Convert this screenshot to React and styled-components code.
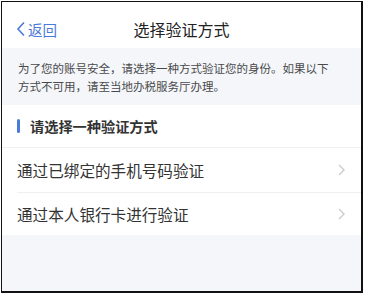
import React from 'react';
import styled, { createGlobalStyle } from 'styled-components';

const GlobalStyle = createGlobalStyle`
  html, body {
    margin: 0;
    padding: 0;
    background: #ffffff;
    font-family: "Noto Sans CJK SC", "Noto Sans", sans-serif;
  }
`;

const Frame = styled.div`
  margin: 1px 0 0 1px;
  width: 362px;
  height: 292px;
  box-sizing: border-box;
  border-style: solid;
  border-color: #111;
  border-width: 1px 2px 2px 1px;
  background: #f4f6fa;
  display: flex;
  flex-direction: column;
  overflow: hidden;
`;

const NavBar = styled.div`
  height: 46px;
  padding-top: 8px;
  box-sizing: border-box;
  background: #fff;
  display: grid;
  grid-template-columns: 80px 1fr 80px;
  align-items: center;
`;

const Back = styled.div`
  display: flex;
  align-items: center;
  gap: 2px;
  padding-left: 14px;
  color: #4a7bd8;
  font-size: 14.5px;
`;

const Title = styled.div`
  text-align: center;
  font-size: 16px;
  color: #222;
`;

const Notice = styled.div`
  padding: 11px 24px 10px 16px;
  font-size: 11.5px;
  line-height: 18px;
  color: #4a4a4a;
`;

const Card = styled.div`
  background: #fff;
  display: flex;
  flex-direction: column;
`;

const SectionHead = styled.div`
  height: 42px;
  display: flex;
  align-items: center;
  padding-left: 15px;
  gap: 10px;
  font-size: 14.2px;
  font-weight: 700;
  color: #333;
  border-bottom: 1px solid #eef0f3;
`;

const Bar = styled.span`
  width: 3px;
  height: 14px;
  border-radius: 1.5px;
  background: #4a7bd8;
`;

const Row = styled.div`
  height: ${({ $h }) => $h}px;
  display: flex;
  align-items: center;
  justify-content: space-between;
  margin-left: 15px;
  padding-right: 16px;
  font-size: 15.6px;
  color: #333;
  border-bottom: ${({ $last }) => ($last ? 'none' : '1px solid #eef0f3')};
`;

const Chevron = () => (
  <svg width="7" height="12" viewBox="0 0 7 12">
    <path d="M1 1l5 5-5 5" fill="none" stroke="#c9cbd0" strokeWidth="1.4" />
  </svg>
);

const BackArrow = () => (
  <svg width="10" height="16" viewBox="0 0 10 16">
    <path d="M8 1.5L2 8l6 6.5" fill="none" stroke="#4a7bd8" strokeWidth="1.6" />
  </svg>
);

export default function App() {
  return (
    <>
      <GlobalStyle />
      <Frame>
        <NavBar>
          <Back>
            <BackArrow />
            <span>返回</span>
          </Back>
          <Title>选择验证方式</Title>
          <div />
        </NavBar>
        <Notice>
          为了您的账号安全，请选择一种方式验证您的身份。如果以下方式不可用，请至当地办税服务厅办理。
        </Notice>
        <Card>
          <SectionHead>
            <Bar />
            请选择一种验证方式
          </SectionHead>
          <Row $h={44}>
            通过已绑定的手机号码验证
            <Chevron />
          </Row>
          <Row $h={42} $last>
            通过本人银行卡进行验证
            <Chevron />
          </Row>
        </Card>
      </Frame>
    </>
  );
}
